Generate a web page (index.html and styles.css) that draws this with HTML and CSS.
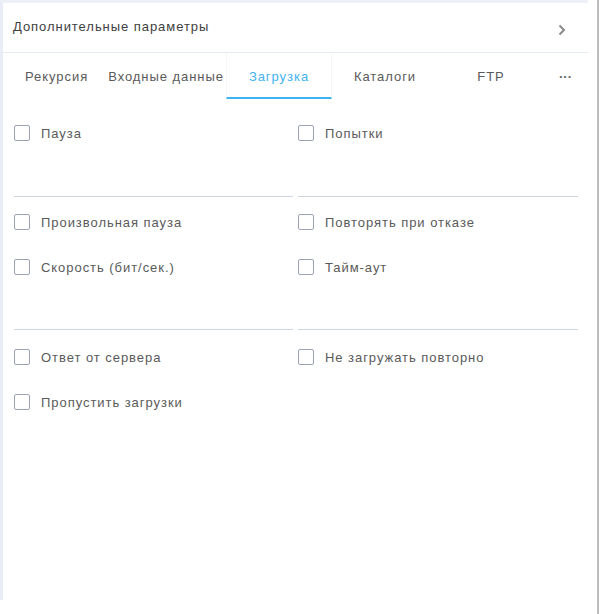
FILE: index.html
```html
<!DOCTYPE html>
<html lang="ru">
<head>
<meta charset="utf-8">
<title>Дополнительные параметры</title>
<link rel="stylesheet" href="styles.css">
</head>
<body>
<div class="screen">
  <div class="panel">
    <div class="header">
      <span class="title">Дополнительные параметры</span>
      <svg class="chev" width="10" height="12" viewBox="0 0 10 12"><polyline points="2.5,1.5 7,6 2.5,10.5" fill="none" stroke="#8a8a8a" stroke-width="2"/></svg>
    </div>
    <div class="tabs">
      <div class="tab t1">Рекурсия</div>
      <div class="tab t2">Входные данные</div>
      <div class="tab fixed active">Загрузка</div>
      <div class="tab fixed">Каталоги</div>
      <div class="tab fixed">FTP</div>
      <div class="tab more">···</div>
    </div>
    <div class="content">
      <div class="section s1">
        <div class="col">
          <label class="row"><span class="box"></span><span class="lbl">Пауза</span></label>
          <div class="spacer sp1"></div>
        </div>
        <div class="col">
          <label class="row"><span class="box"></span><span class="lbl">Попытки</span></label>
          <div class="spacer sp1"></div>
        </div>
      </div>
      <div class="section s2">
        <div class="col">
          <label class="row"><span class="box"></span><span class="lbl">Произвольная пауза</span></label>
          <label class="row"><span class="box"></span><span class="lbl">Скорость (бит/сек.)</span></label>
          <div class="spacer sp2"></div>
        </div>
        <div class="col">
          <label class="row"><span class="box"></span><span class="lbl">Повторять при отказе</span></label>
          <label class="row"><span class="box"></span><span class="lbl">Тайм-аут</span></label>
          <div class="spacer sp2"></div>
        </div>
      </div>
      <div class="section s3">
        <div class="col nob">
          <label class="row"><span class="box"></span><span class="lbl">Ответ от сервера</span></label>
          <label class="row"><span class="box"></span><span class="lbl">Пропустить загрузки</span></label>
        </div>
        <div class="col nob">
          <label class="row"><span class="box"></span><span class="lbl">Не загружать повторно</span></label>
        </div>
      </div>
    </div>
  </div>
  <div class="gap"></div>
  <div class="vline"></div>
</div>
</body>
</html>
```
FILE: styles.css
```css
html, body {
  margin: 0;
  padding: 0;
  background: #ffffff;
}
body {
  font-family: "Liberation Sans", Arial, sans-serif;
  font-size: 13px;
  letter-spacing: 0.95px;
  color: #5a5a5a;
}
.screen {
  display: flex;
  width: 600px;
  height: 614px;
}
.panel {
  width: 585px;
  height: 597px;
  border-left: 3px solid #e9eef6;
  border-top: 3px solid #edf1f7;
  background: #fff;
  display: flex;
  flex-direction: column;
}
.gap {
  width: 9px;
}
.vline {
  width: 2px;
  height: 614px;
  background: #bdbdbd;
}
.header {
  height: 47px;
  border-bottom: 1px solid #e6ebf3;
  display: flex;
  align-items: center;
  justify-content: space-between;
  padding: 0 21px 2px 10px;
}
.title {
  color: #404040;
  font-size: 13px;
}
.chev {
  margin-top: 6px;
}
.tabs {
  display: flex;
  height: 46px;
  padding-left: 10px;
}
.tab {
  display: flex;
  align-items: center;
  justify-content: center;
  color: #5a5a5a;
  box-sizing: border-box;
  height: 46px;
  white-space: nowrap;
}
.t1 {
  padding: 0 8px 0 12px;
}
.t2 {
  padding: 0 2px 0 12px;
}
.fixed {
  width: 106px;
}
.active {
  color: #42b2ee;
  border-bottom: 2px solid #3fb3ee;
  border-left: 1px solid #f4f6f9;
  border-right: 1px solid #f4f6f9;
  padding-top: 2px;
}
.more {
  width: 43px;
  letter-spacing: 0;
  font-weight: bold;
  color: #666;
}
.content {
  padding: 0 10px 0 11px;
}
.section {
  display: grid;
  grid-template-columns: 279px 280px;
  column-gap: 5px;
}
.s1 {
  padding-top: 11px;
}
.s2 {
  padding-top: 2px;
}
.s3 {
  padding-top: 4px;
}
.col {
  border-bottom: 1px solid #cdd6e4;
  display: flex;
  flex-direction: column;
}
.col.nob {
  border-bottom: none;
}
.row {
  height: 46px;
  display: flex;
  align-items: center;
}
.row + .row {
  margin-top: -1px;
}
.box {
  width: 14px;
  height: 14px;
  border: 1.5px solid #9aa3b6;
  border-radius: 2px;
  flex: none;
}
.lbl {
  margin-left: 11px;
  color: #5a5a5a;
}
.sp1 {
  height: 40px;
}
.sp2 {
  height: 39px;
}
```
